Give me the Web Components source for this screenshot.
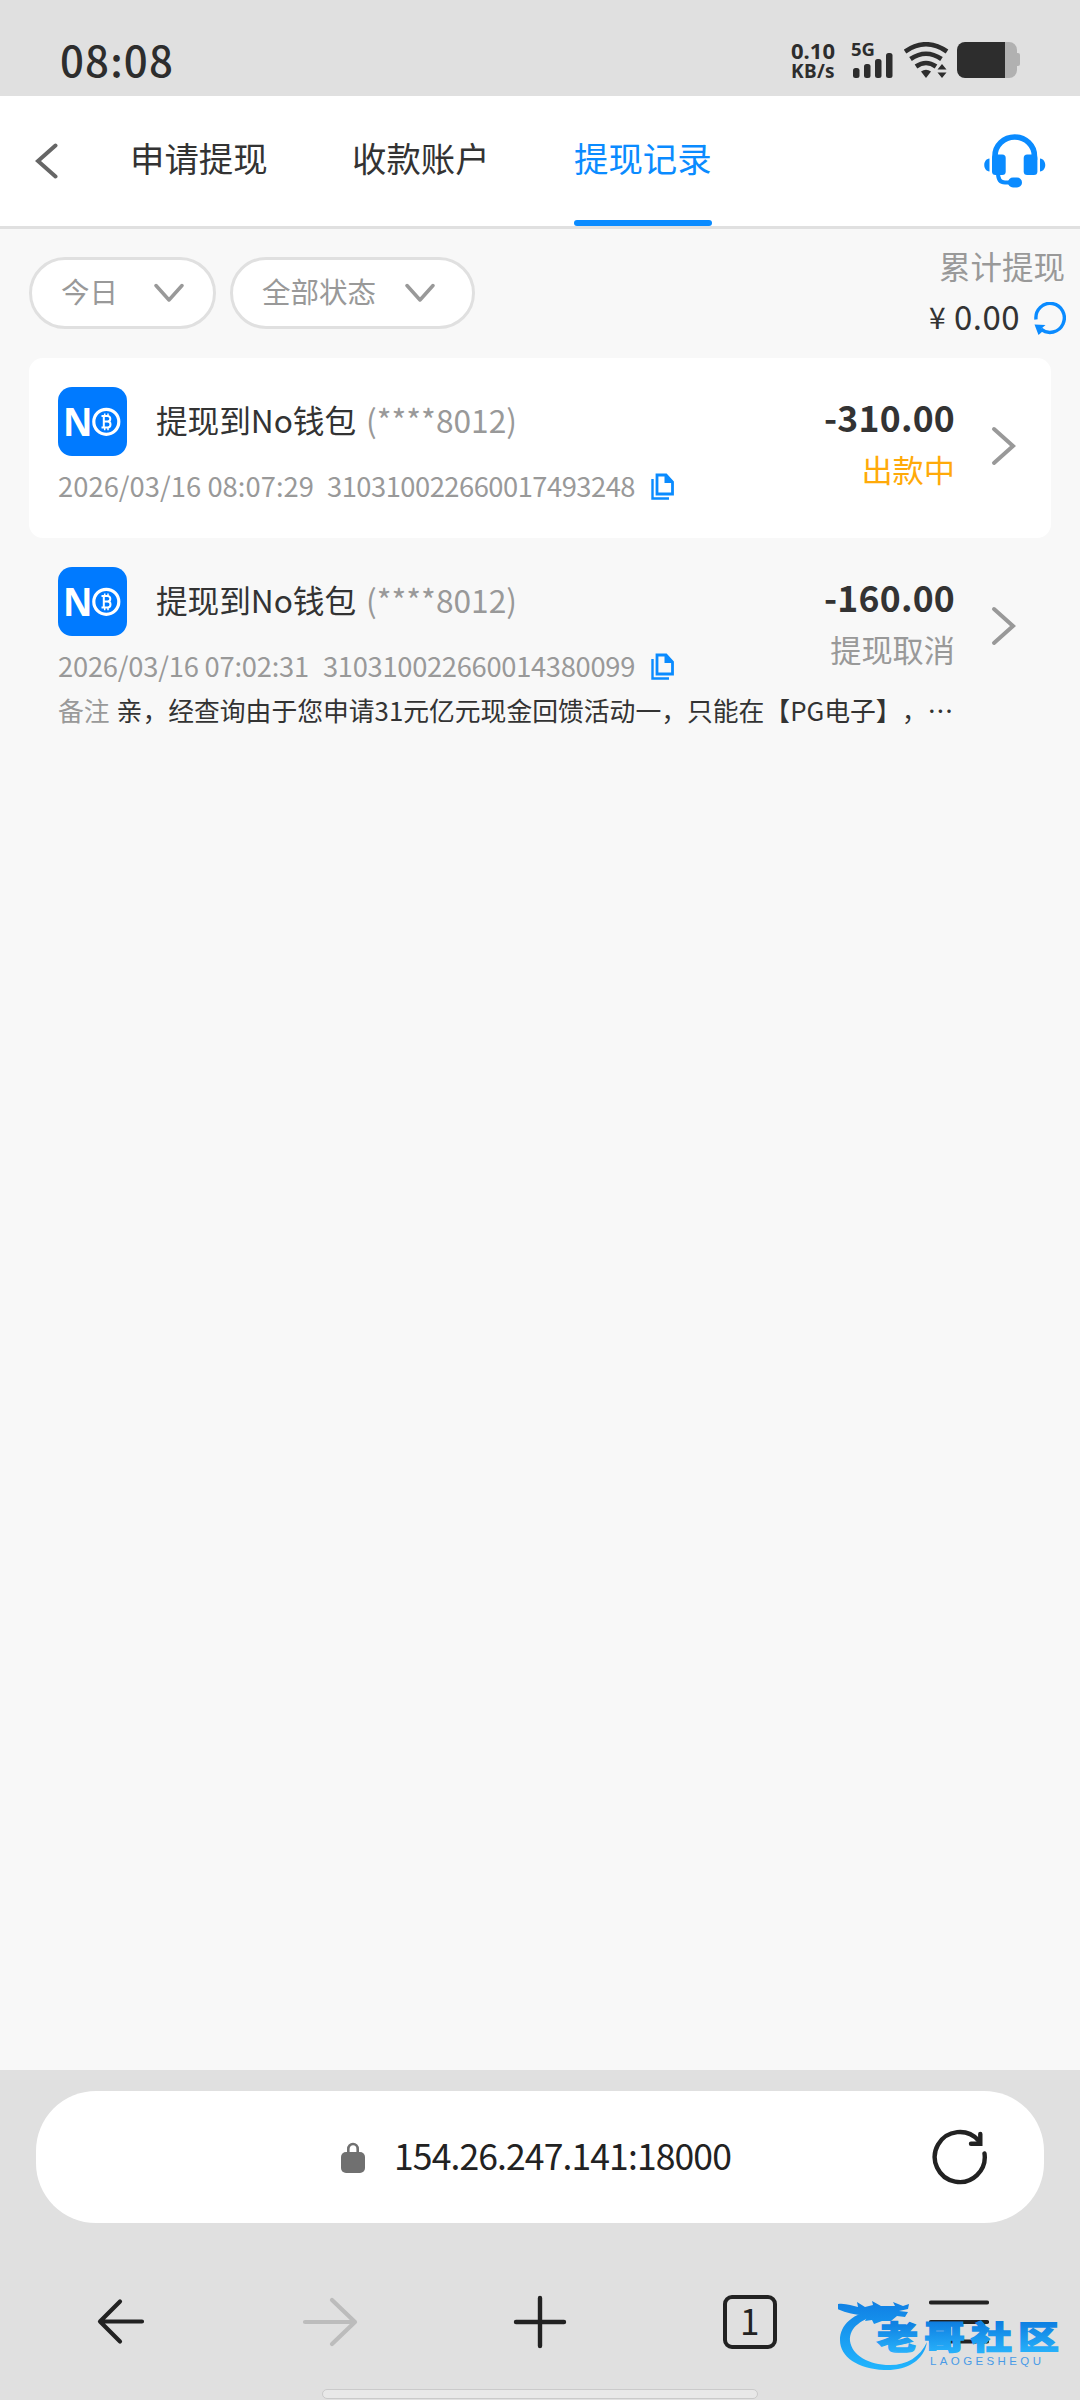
<!DOCTYPE html>
<html lang="zh-CN">
<head>
<meta charset="UTF-8">
<title>提现记录</title>
<style>
  :root {
    --color-primary: #0a8bff;
    --color-text: #333;
    --color-muted: #999;
    --color-line: #e0e0e0;
    --color-bg: #f8f8f8;
    --color-chrome: #e0e0e0;
    --color-pending: #ffaa09;
  }

  body {
    margin: 0;
    font-family: "Noto Sans CJK SC", "Noto Sans", sans-serif;
    color: var(--color-text);
    text-spacing-trim: space-all;
  }
</style>
</head>
<body>
<phone-screen>
  <status-bar slot="top"></status-bar>
  <tab-header slot="top"></tab-header>
  <filter-bar></filter-bar>
  <record-item white account="(****8012)" time="2026/03/16 08:07:29" time-width="256" order="310310022660017493248" order-width="308" gap="13" amount="-310.00" status="出款中" pending></record-item>
  <record-item account="(****8012)" time="2026/03/16 07:02:31" time-width="251" order="310310022660014380099" order-width="312" gap="14" amount="-160.00" status="提现取消" remark="亲，经查询由于您申请31元亿元现金回馈活动一，只能在【PG电子】，…"></record-item>
  <browser-bar slot="bottom"></browser-bar>
</phone-screen>

<script>
// Text set to a fixed width by spreading the letters.
class FitText extends HTMLElement {
  constructor() {
    super();
    this.attachShadow({ mode: "open" }).innerHTML = `
      <style>
        :host { display: inline-block; vertical-align: top; }
        span { display: inline-block; vertical-align: top; white-space: pre; }
      </style>
      <span><slot></slot></span>
    `;
  }

  connectedCallback() {
    const width = Number(this.getAttribute("width"));
    const span = this.shadowRoot.querySelector("span");
    const count = this.textContent.length;
    const natural = span.getBoundingClientRect().width;
    this.style.width = `${width}px`;
    span.style.letterSpacing = `${(width - natural) / count}px`;
  }
}
customElements.define("fit-text", FitText);

class PhoneScreen extends HTMLElement {
  constructor() {
    super();
    this.attachShadow({ mode: "open" }).innerHTML = `
      <style>
        :host {
          width: 1080px;
          height: 2400px;
          display: flex;
          flex-direction: column;
          overflow: hidden;
          background: var(--color-bg);
        }
        main { flex: 1; }
      </style>
      <slot name="top"></slot>
      <main><slot></slot></main>
      <slot name="bottom"></slot>
    `;
  }
}
customElements.define("phone-screen", PhoneScreen);

class StatusBar extends HTMLElement {
  constructor() {
    super();
    this.attachShadow({ mode: "open" }).innerHTML = `
      <style>
        :host {
          height: 96px;
          padding: 42px 60px 0 60px;
          box-sizing: border-box;
          display: flex;
          align-items: flex-start;
          background: var(--color-chrome);
          color: #2d2d2d;
          font-family: "Noto Sans", sans-serif;
        }
        .time {
          margin-right: auto;
          font-family: "Noto Sans CJK SC", sans-serif;
          font-size: 42px;
          font-weight: 500;
          line-height: 34px;
        }
        .speed {
          width: 44px;
          margin-right: 16px;
          font-weight: 700;
        }
        .speed div { height: 21px; line-height: 16px; font-size: 22px; }
        .speed div + div { line-height: 17px; font-size: 19px; }
        .signal { width: 43px; margin-right: 10px; }
        .signal b { display: block; height: 11px; font-size: 18.5px; line-height: 14px; }
        svg { display: block; }
      </style>
      <div class="time"><fit-text width="114">08:08</fit-text></div>
      <div class="speed">
        <div><fit-text width="44">0.10</fit-text></div>
        <div><fit-text width="44">KB/s</fit-text></div>
      </div>
      <div class="signal">
        <b>5G</b>
        <svg width="43" height="25" viewBox="0 0 43 25" fill="#2d2d2d">
          <rect x="2" y="15" width="6.5" height="10" rx="2.5"/>
          <rect x="13" y="11" width="6.5" height="14" rx="2.5"/>
          <rect x="24" y="6" width="6.5" height="19" rx="2.5"/>
          <rect x="35" y="0" width="6.5" height="25" rx="2.5"/>
        </svg>
      </div>
      <svg width="53" height="36" viewBox="0 0 53 36">
        <g fill="none" stroke="#2d2d2d" stroke-width="4.6">
          <path d="M1 9.5Q22 -5 43 9.5"/>
          <path d="M6.5 17Q22 6.5 37.5 17"/>
          <path d="M12 24.5Q22 17.5 32 24.5"/>
        </g>
        <path d="M17 29.5Q22 26 27 29.5L22 36z" fill="#2d2d2d"/>
        <path d="M33.5 27.5L38 22l4.5 5.5zM33.5 30.5L38 36l4.5-5.5z" fill="#2d2d2d"/>
      </svg>
      <svg width="63" height="36" viewBox="0 0 63 36">
        <path d="M48 0h4a8 8 0 0 1 8 8v3h1a2 2 0 0 1 2 2v9a2 2 0 0 1-2 2h-1v4a8 8 0 0 1-8 8h-4z" fill="#b1b1b1"/>
        <path d="M8 0h40v36H8a8 8 0 0 1-8-8V8a8 8 0 0 1 8-8z" fill="#2d2d2d"/>
      </svg>
    `;
  }
}
customElements.define("status-bar", StatusBar);

class TabHeader extends HTMLElement {
  constructor() {
    super();
    this.attachShadow({ mode: "open" }).innerHTML = `
      <style>
        :host {
          height: 133px;
          padding: 0 34px 0 35px;
          box-sizing: border-box;
          display: flex;
          align-items: center;
          background: #fff;
          border-bottom: 3px solid var(--color-line);
        }
        svg { display: block; }
        nav {
          height: 130px;
          margin: 0 auto 0 72px;
          display: flex;
          gap: 84px;
        }
        .tab {
          width: 138px;
          padding-top: 31px;
          box-sizing: border-box;
          display: flex;
          flex-direction: column;
          justify-content: space-between;
          font-size: 34.4px;
          line-height: 60px;
          white-space: nowrap;
        }
        .tab.is-active { color: var(--color-primary); }
        .tab.is-active::after {
          content: "";
          height: 6px;
          border-radius: 3px;
          background: var(--color-primary);
        }
      </style>
      <svg width="23" height="36" viewBox="0 0 23 36">
        <path d="M20.5 2.5L3 18l17.5 15.5" fill="none" stroke="#666" stroke-width="4" stroke-linecap="round"/>
      </svg>
      <nav>
        <div class="tab">申请提现</div>
        <div class="tab">收款账户</div>
        <div class="tab is-active">提现记录</div>
      </nav>
      <svg width="62" height="54" viewBox="0 0 62 54" fill="#0a8bff">
        <path d="M11 24V22a19.7 19 0 0 1 39.4 0v4" fill="none" stroke="#0a8bff" stroke-width="5.6"/>
        <rect x="8" y="20.5" width="13.7" height="20.5" rx="3.5"/>
        <rect x="39.7" y="20.5" width="13.7" height="20.5" rx="3.5"/>
        <path d="M5.5 24.5v13C-1.5 37 -1.5 25 5.5 24.5zM56 24.5v13C63 37 63 25 56 24.5z"/>
        <path d="M14 39c0 7 3 9.5 7 9.5h6" fill="none" stroke="#0a8bff" stroke-width="4"/>
        <rect x="24" y="43.5" width="14" height="10" rx="5"/>
      </svg>
    `;
  }
}
customElements.define("tab-header", TabHeader);

class FilterPill extends HTMLElement {
  constructor() {
    super();
    this.attachShadow({ mode: "open" }).innerHTML = `
      <style>
        :host {
          height: 72px;
          box-sizing: border-box;
          padding: 0 29px;
          display: flex;
          align-items: center;
          justify-content: space-between;
          border: 3px solid var(--color-line);
          border-radius: 36px;
          background: #fff;
          color: var(--color-muted);
          font-size: 28.5px;
          line-height: 66px;
        }
        span { margin-top: -4px; }
      </style>
      <span><slot></slot></span>
      <svg width="30" height="20" viewBox="0 0 30 20">
        <path d="M2 2.5L15 17 28 2.5" fill="none" stroke="#999" stroke-width="3.5" stroke-linecap="round" stroke-linejoin="round"/>
      </svg>
    `;
  }
}
customElements.define("filter-pill", FilterPill);

class FilterBar extends HTMLElement {
  constructor() {
    super();
    this.attachShadow({ mode: "open" }).innerHTML = `
      <style>
        :host {
          height: 129px;
          padding: 11px 14px 0 29px;
          box-sizing: border-box;
          display: flex;
          align-items: flex-start;
        }
        filter-pill { width: 187px; margin: 17px 14px 0 0; }
        filter-pill.wide { width: 245px; padding-right: 37px; }
        .summary { margin-left: auto; text-align: right; }
        .label { margin-right: 1px; color: var(--color-muted); font-size: 31.5px; line-height: 51px; }
        .total {
          display: flex;
          align-items: center;
          justify-content: flex-end;
          font-size: 33px;
          line-height: 51px;
        }
        .total svg { margin: 4px 0 0 14px; }
        .yen { font-size: 30px; margin-right: 7px; }
      </style>
      <filter-pill>今日</filter-pill>
      <filter-pill class="wide">全部状态</filter-pill>
      <div class="summary">
        <div class="label">累计提现</div>
        <div class="total">
          <fit-text class="yen" width="18">¥</fit-text><fit-text width="66">0.00</fit-text>
          <svg width="32" height="33" viewBox="0 0 32 33">
            <path d="M2 17.5A14.2 14.5 0 1 1 7 27" fill="none" stroke="#0a8bff" stroke-width="3.4"/>
            <path d="M0.5 22.5l11 0.5-4 3.5 1.5 2.5-4.5 4z" fill="#0a8bff"/>
          </svg>
        </div>
      </div>
    `;
  }
}
customElements.define("filter-bar", FilterBar);

class WalletLogo extends HTMLElement {
  constructor() {
    super();
    this.attachShadow({ mode: "open" }).innerHTML = `
      <style>
        :host { display: block; width: 69px; height: 69px; }
        svg { display: block; }
      </style>
      <svg width="69" height="69" viewBox="0 0 69 69">
        <rect width="69" height="69" rx="14" fill="#007aff"/>
        <text x="5" y="49" fill="#fff" font-family="Noto Sans" font-size="40" font-weight="700" textLength="29.5" lengthAdjust="spacingAndGlyphs">N</text>
        <circle cx="48.3" cy="34.8" r="12.5" fill="none" stroke="#fff" stroke-width="3.2"/>
        <g fill="none" stroke="#fff" stroke-width="2">
          <path d="M43.5 29h6a2.7 2.7 0 0 1 0 5.6h-4M49.5 34.6a2.9 2.9 0 0 1 0 6h-6M45.8 29v11.5"/>
          <path d="M46.7 26.5v3M50 26.5v3M46.7 40v3.2M50 40v3.2" stroke-width="1.5"/>
        </g>
      </svg>
    `;
  }
}
customElements.define("wallet-logo", WalletLogo);

class RecordItem extends HTMLElement {
  constructor() {
    super();
    this.attachShadow({ mode: "open" });
  }

  connectedCallback() {
    const get = (name) => this.getAttribute(name);
    const remark = get("remark");
    this.shadowRoot.innerHTML = `
      <style>
        :host {
          min-height: 180px;
          margin: 0 29px;
          padding-left: 29px;
          box-sizing: border-box;
          display: grid;
          grid-template-columns: 1fr auto 96px;
          align-content: start;
          border-radius: 14px;
        }
        :host([white]) { background: #fff; }
        .info { padding-top: 29px; }
        .title {
          height: 69px;
          display: flex;
          align-items: center;
          font-size: 31.7px;
          line-height: 64px;
        }
        .title fit-text { margin: -6px 0 0 29px; }
        .title .account { margin-left: 10px; color: var(--color-muted); }
        .meta {
          height: 40px;
          margin-top: 8px;
          display: flex;
          align-items: center;
          color: var(--color-muted);
          font-size: 27.3px;
          line-height: 40px;
        }
        .meta fit-text { margin-top: 1px; }
        .meta svg { margin: 6px 0 0 16px; }
        .result { padding-top: 35px; text-align: right; line-height: 48px; }
        .amount { height: 48px; font-size: 35.5px; font-weight: 700; }
        .status { margin-top: 4px; font-size: 31.2px; color: var(--color-muted); }
        :host([pending]) .status { color: var(--color-pending); }
        .arrow { margin: 68px 0 0 36px; }
        .remark {
          grid-column: 1 / 3;
          margin-top: 8px;
          font-size: 25.8px;
          line-height: 36px;
          white-space: nowrap;
        }
        .remark span { margin-right: 7px; color: var(--color-muted); }
      </style>
      <div class="info">
        <div class="title">
          <wallet-logo></wallet-logo>
          <fit-text width="200">提现到No钱包</fit-text>
          <fit-text class="account" width="151">${get("account")}</fit-text>
        </div>
        <div class="meta">
          <fit-text width="${get("time-width")}">${get("time")}</fit-text>
          <fit-text width="${get("order-width")}" style="margin-left: ${get("gap")}px">${get("order")}</fit-text>
          <svg width="23" height="28" viewBox="0 0 23 28">
            <path d="M1.5 6v19.5H18" fill="none" stroke="#0a8bff" stroke-width="2.4"/>
            <path d="M6 2h9l6.5 7v12H6z" fill="none" stroke="#0a8bff" stroke-width="2.8"/>
            <path d="M13.5 1.5V10H22z" fill="#0a8bff"/>
          </svg>
        </div>
      </div>
      <div class="result">
        <div class="amount"><fit-text width="131">${get("amount")}</fit-text></div>
        <div class="status">${get("status")}</div>
      </div>
      <svg class="arrow" width="25" height="40" viewBox="0 0 25 40">
        <path d="M3 3L22 20 3 37" fill="none" stroke="#999" stroke-width="4" stroke-linecap="round"/>
      </svg>
      ${remark ? `<div class="remark"><span>备注</span>${remark}</div>` : ""}
    `;
  }
}
customElements.define("record-item", RecordItem);

class SiteWatermark extends HTMLElement {
  constructor() {
    super();
    this.attachShadow({ mode: "open" }).innerHTML = `
      <style>
        :host { display: block; width: 230px; height: 80px; }
        svg { display: block; }
      </style>
      <svg width="230" height="80" viewBox="0 0 230 80">
        <defs>
          <linearGradient id="ring" gradientUnits="userSpaceOnUse" x1="0" y1="5" x2="0" y2="76">
            <stop offset="0" stop-color="#1080e4"/>
            <stop offset="1" stop-color="#22b8ff"/>
          </linearGradient>
          <linearGradient id="ink" gradientUnits="userSpaceOnUse" x1="0" y1="-26" x2="0" y2="3">
            <stop offset="0" stop-color="#0f80e2"/>
            <stop offset="1" stop-color="#27b0fa"/>
          </linearGradient>
        </defs>
        <g fill="url(#ring)">
          <path d="M40 12C14 16 2 28 2 43c0 17 18 29 44 30 22 1 40-9 43-28-7 15-20 23-37 23-22 0-38-10-40-24-1-14 12-22 30-27z"/>
          <path d="M0 7c8-1 14 2 20 3l-1-5 8 5 8-2-1-4 9 5 14 0-2-4 10 4 6-2-1 5-9 2 9 1-3 5-8-1-6 5-9 0-8 3-2-4-7 1 3-6c-14 1-29-4-40-11z"/>
        </g>
        <g transform="translate(39 52) scale(1.28 1)">
          <text fill="url(#ink)" stroke="url(#ink)" stroke-width="1.3" font-family="Noto Sans CJK SC" font-size="32" font-weight="900" letter-spacing="4.7">老哥社区</text>
        </g>
        <text x="92" y="68" fill="#4a9be6" font-family="Liberation Sans" font-size="11.5" textLength="111">LAOGESHEQU</text>
      </svg>
    `;
  }
}
customElements.define("site-watermark", SiteWatermark);

class BrowserBar extends HTMLElement {
  constructor() {
    super();
    this.attachShadow({ mode: "open" }).innerHTML = `
      <style>
        :host {
          height: 330px;
          padding-top: 21px;
          box-sizing: border-box;
          display: block;
          position: relative;
          background: var(--color-chrome);
          color: #222;
        }
        svg { display: block; }
        .address {
          height: 132px;
          margin: 0 36px;
          padding: 0 56px 0 305px;
          box-sizing: border-box;
          display: flex;
          align-items: center;
          border-radius: 60px;
          background: #fff;
          font-size: 35.5px;
        }
        .address fit-text { margin: -4px auto 0 29px; line-height: 60px; }
        nav {
          height: 60px;
          margin-top: 69px;
          padding: 0 16px;
          display: grid;
          grid-template-columns: repeat(5, 1fr);
          place-items: center;
        }
        .tabs {
          width: 54px;
          height: 54px;
          box-sizing: border-box;
          border: 4px solid #222;
          border-radius: 9px;
          font-size: 35px;
          line-height: 41px;
          text-align: center;
        }
        .handle {
          width: 436px;
          height: 10px;
          margin: 37px auto 0;
          box-sizing: border-box;
          border: 1px solid #cacaca;
          border-radius: 5px;
          background: #e8e8e8;
        }
        site-watermark { position: absolute; right: 12px; bottom: 23px; }
      </style>
      <div class="address">
        <svg width="24" height="31" viewBox="0 0 24 31">
          <rect y="10" width="24" height="21" rx="5" fill="#707070"/>
          <path d="M7.3 12V7a4.7 5 0 0 1 9.4 0v5" fill="none" stroke="#707070" stroke-width="2.6"/>
        </svg>
        <fit-text width="337">154.26.247.141:18000</fit-text>
        <svg width="56" height="56" viewBox="0 0 56 56" fill="none" stroke="#222" stroke-width="4.4" stroke-linecap="round">
          <path d="M52.5 24.5A25 25 0 1 1 46.5 11.5"/>
          <path d="M48.3 5v9.7H39"/>
        </svg>
      </div>
      <nav>
        <svg width="48" height="48" viewBox="0 0 48 48" fill="none" stroke="#222" stroke-width="4.2" stroke-linecap="round" stroke-linejoin="round">
          <path d="M45 23.5H4M23 3.5l-20 20 20 20"/>
        </svg>
        <svg width="56" height="52" viewBox="0 0 56 52" fill="none" stroke="#bcbcbc" stroke-width="4.2" stroke-linecap="round" stroke-linejoin="round">
          <path d="M3 26h50M30 4l23 22-23 22"/>
        </svg>
        <svg width="54" height="54" viewBox="0 0 54 54" fill="none" stroke="#222" stroke-width="4.4" stroke-linecap="round">
          <path d="M3 27h48M27 3v48"/>
        </svg>
        <div class="tabs">1</div>
        <svg width="60" height="46" viewBox="0 0 60 46" fill="none" stroke="#222" stroke-width="4.2" stroke-linecap="round">
          <path d="M2 3.5h56M2 23h56M2 42.5h56"/>
        </svg>
      </nav>
      <div class="handle"></div>
      <site-watermark></site-watermark>
    `;
  }
}
customElements.define("browser-bar", BrowserBar);
</script>
</body>
</html>
